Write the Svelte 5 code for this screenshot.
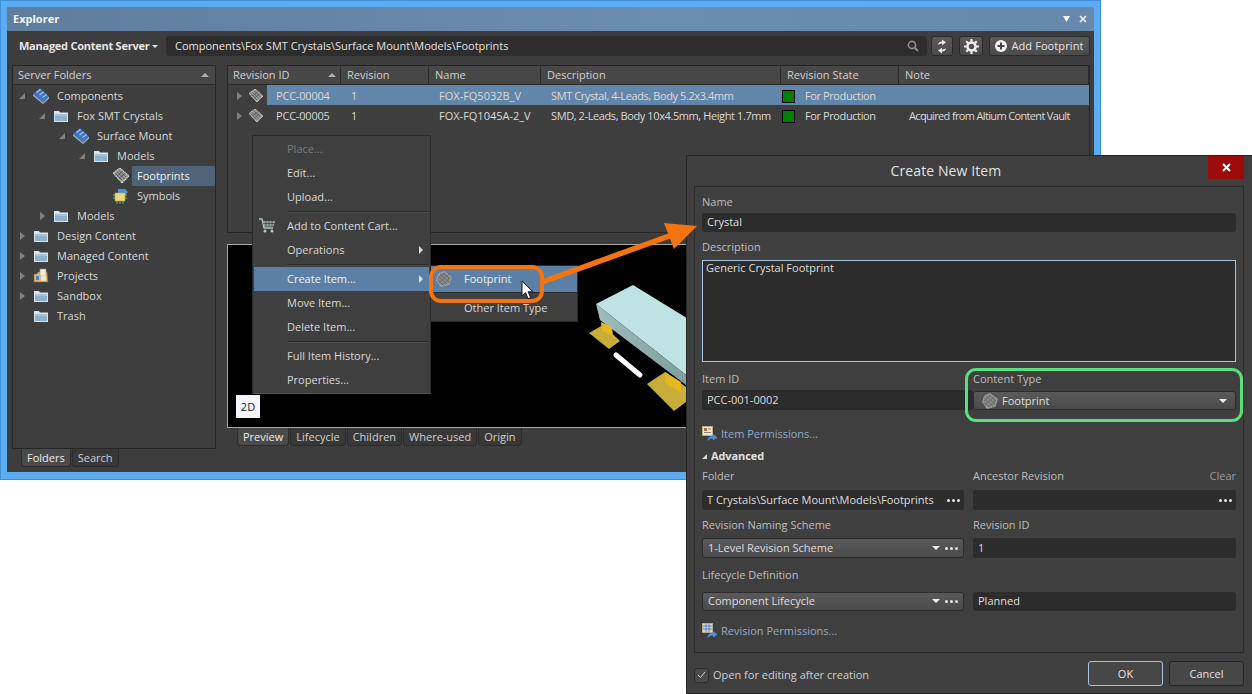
<script>
  const tree = [
    { label: "Components", level: 0, arrow: "open", icon: "comp" },
    { label: "Fox SMT Crystals", level: 1, arrow: "open", icon: "folder" },
    { label: "Surface Mount", level: 2, arrow: "open", icon: "comp" },
    { label: "Models", level: 3, arrow: "open", icon: "folder" },
    { label: "Footprints", level: 4, arrow: "", icon: "chip", selected: true },
    { label: "Symbols", level: 4, arrow: "", icon: "symbol" },
    { label: "Models", level: 1, arrow: "closed", icon: "folder" },
    { label: "Design Content", level: 0, arrow: "closed", icon: "folder" },
    { label: "Managed Content", level: 0, arrow: "closed", icon: "folder" },
    { label: "Projects", level: 0, arrow: "closed", icon: "project" },
    { label: "Sandbox", level: 0, arrow: "closed", icon: "folder" },
    { label: "Trash", level: 0, arrow: "", icon: "folder" }
  ];

  const columns = ["Revision ID", "Revision", "Name", "Description", "Revision State", "Note"];

  const revisions = [
    { id: "PCC-00004", rev: "1", name: "FOX-FQ5032B_V", desc: "SMT Crystal, 4-Leads, Body 5.2x3.4mm", note: "", selected: true },
    { id: "PCC-00005", rev: "1", name: "FOX-FQ1045A-2_V", desc: "SMD, 2-Leads, Body 10x4.5mm, Height 1.7mm", note: "Acquired from Altium Content Vault" }
  ];

  const menu = [
    { label: "Place...", disabled: true },
    { label: "Edit..." },
    { label: "Upload...", sep: true },
    { label: "Add to Content Cart...", cart: true },
    { label: "Operations", sub: true, sep: true },
    { label: "Create Item...", sub: true, active: true },
    { label: "Move Item..." },
    { label: "Delete Item...", sep: true },
    { label: "Full Item History..." },
    { label: "Properties..." }
  ];

  const previewTabs = ["Preview", "Lifecycle", "Children", "Where-used", "Origin"];
</script>

{#snippet icon(kind)}
  {#if kind === "folder"}
    <svg class="ico" viewBox="0 0 16 16">
      <path d="M1 3h5l1 1.500h8V14H1z" fill="#d6e6f1" />
      <path d="M2 6h12v7H2z" fill="#8eb0ca" />
      <path d="M2 6h12v2H2z" fill="#a4c3d9" />
    </svg>
  {:else if kind === "comp"}
    <svg class="ico" viewBox="0 0 16 16">
      <path d="M0 6 7 0l9 8.500-6 6z" fill="#3f74c8" />
      <path d="M0 6l10 8.500 6-6V10.500L10 16 0 7.800z" fill="#a3b4c4" />
      <path d="M3.500 4.500 7.500 1.500M6.500 7 10.500 4M9.500 9.500 13.500 6.500" stroke="#a8c8f0" stroke-width="1.100" />
    </svg>
  {:else if kind === "chip"}
    <svg class="ico" viewBox="0 0 16 16">
      <path d="M0 5 7 0l9 8-7 7z" fill="#979797" />
      <path d="M2 5.500 9 12M4 4l7 6.500M6 2.500l7 6.500M3.500 8.500l7-6M6 10.500l7-6" stroke="#575757" stroke-width=".9" />
      <path d="M0 5 9 15l7-7L7 0z" fill="none" stroke="#dedede" stroke-width="1.100" stroke-dasharray="1.300 .7" />
    </svg>
  {:else if kind === "symbol"}
    <svg class="ico" viewBox="0 0 16 16">
      <path d="M5 1h7l3 3-3 3H5z" fill="#4c8fe0" />
      <rect x="2" y="5" width="10" height="8" fill="#e8d77c" stroke="#b8a850" stroke-width=".6" />
      <path d="M0 7h2M0 10h2M12 7h2M12 10h2M4 13v3M7 13v3M10 13v3" stroke="#6cc04c" stroke-width="1" />
    </svg>
  {:else if kind === "project"}
    <svg class="ico" viewBox="0 0 16 16">
      <path d="M1 6h3l1-2h9l1 10H1z" fill="#dcb878" stroke="#8a6b35" stroke-width=".6" />
      <rect x="7" y="1" width="6" height="7" fill="#efefe0" stroke="#a09c80" stroke-width=".6" />
      <path d="M3 8h3v4H3z" fill="#4f86c0" />
      <rect x="8" y="8" width="5" height="5" fill="#f4e8b8" />
    </svg>
  {/if}
{/snippet}

{#snippet roundChip()}
  <svg class="round-chip" viewBox="0 0 16 16">
    <path d="M8 .500 15.500 6 13 13.500 5 15.500.500 9 2.500 3z" fill="#8b8b8b" />
    <path d="M2 5l10 9M4 3l10 9M7 2l7 6M1.500 9l7 6M3 12l10-9M1.500 8.500l7-6.500M6 14l8-7" stroke="#636363" stroke-width=".8" />
    <path d="M8 .500 15.500 6 13 13.500 5 15.500.500 9 2.500 3z" fill="none" stroke="#cdcdcd" stroke-width=".9" stroke-dasharray="1 1" />
  </svg>
{/snippet}

{#snippet perm(grid)}
  <svg class="perm" viewBox="0 0 16 16">
    <rect x="0.500" y="0.500" width="10" height="9" fill={grid ? "#cfdcec" : "#f3e6c4"} stroke="#c9b98a" stroke-width=".7" />
    {#if grid}
      <path d="M1 3h9M1 6h9M4 1v8M7 1v8" stroke="#5478a8" stroke-width=".9" />
    {:else}
      <rect x="2" y="2" width="3" height="3" fill="#b56a4a" />
      <path d="M6 3h3M2 6.500h7" stroke="#777" stroke-width=".9" />
    {/if}
    <path d="M5.500 15c0-3 2-5 5.500-5V8l4.500 3.500L11 14.500V12.500c-2 0-4 .8-5.500 2.500z" fill="#4d8fde" />
  </svg>
{/snippet}

{#snippet dots()}
  <span class="dots"><i></i><i></i><i></i></span>
{/snippet}

<div class="stage">
  <section class="explorer">
    <div class="inner">
      <header class="titlebar">
        <span class="title">Explorer</span>
        <span class="win-ctl">
          <svg width="7" height="6" viewBox="0 0 7 6"><path d="M0 0h7L3.500 6z" fill="#f0f0f0" /></svg>
          <svg width="8" height="8" viewBox="0 0 8 8"><path d="M1 1l6 6M7 1 1 7" stroke="#f0f0f0" stroke-width="1.700" /></svg>
        </span>
      </header>

      <div class="toolbar">
        <span class="server">Managed Content Server</span>
        <span class="server-caret"></span>
        <div class="path">
          <span>Components\Fox SMT Crystals\Surface Mount\Models\Footprints</span>
          <svg width="12" height="12" viewBox="0 0 12 12"><circle cx="5" cy="5" r="3.600" fill="none" stroke="#8e8e8e" stroke-width="1.600" /><path d="M7.800 7.800 11 11" stroke="#8e8e8e" stroke-width="2" /></svg>
        </div>
        <button class="tool sync" aria-label="Refresh">
          <svg width="12" height="15" viewBox="0 0 12 15"><path d="M2 6c0-2.500 2-3.500 4-3.500V.500L10 3.500 6 6.300V4.500C4.500 4.500 3.500 5 2 6z" fill="#e8e8e8" /><path d="M10 9c0 2.500-2 3.500-4 3.500v2L2 11.500 6 8.700v1.800c1.500 0 2.500-.5 4-1.500z" fill="#e8e8e8" /></svg>
        </button>
        <button class="tool gear" aria-label="Settings">
          <svg width="15" height="15" viewBox="0 0 15 15"><circle cx="7.500" cy="7.500" r="4" fill="none" stroke="#ececec" stroke-width="2.500" /><path d="M7.500 0v3M7.500 12v3M0 7.500h3M12 7.500h3M2.200 2.200l2 2M10.800 10.800l2 2M12.800 2.200l-2 2M4.200 10.800l-2 2" stroke="#ececec" stroke-width="2.200" /></svg>
        </button>
        <button class="tool add">
          <svg width="12" height="12" viewBox="0 0 12 12"><circle cx="6" cy="6" r="6" fill="#f2f2f2" /><path d="M6 2.500v7M2.500 6h7" stroke="#444" stroke-width="2" /></svg>
          Add Footprint
        </button>
      </div>

      <div class="body">
        <div class="left">
          <div class="panel folders">
            <div class="head head-left"><span>Server Folders</span><span class="sort"></span></div>
            <ul class="tree">
              {#each tree as node}
                <li class="node" style="padding-left: {4 + node.level * 20}px">
                  <span class="arrow {node.arrow}"></span>
                  {@render icon(node.icon)}
                  <span class="label" class:selected={node.selected}>{node.label}</span>
                </li>
              {/each}
            </ul>
          </div>
          <div class="tabs left-tabs">
            <span class="tab on">Folders</span>
            <span class="tab">Search</span>
          </div>
        </div>

        <div class="right">
          <div class="panel grid">
            <div class="row head">
              {#each columns as col, i}
                <span class="hcell">{col}{#if i === 0}<span class="sort"></span>{/if}</span>
              {/each}
            </div>
            {#each revisions as r}
              <div class="row rec" class:selected={r.selected}>
                <span class="cell first">
                  <span class="arrow closed"></span>
                  {@render icon("chip")}
                  <span class="rid">{r.id}</span>
                </span>
                <span class="cell">{r.rev}</span>
                <span class="cell">{r.name}</span>
                <span class="cell narrow">{r.desc}</span>
                <span class="cell state"><i class="swatch"></i><span class="narrow">For Production</span></span>
                <span class="cell narrower">{r.note}</span>
              </div>
            {/each}
          </div>

          <div class="preview">
            <svg class="model" width="460" height="182" viewBox="228 245 460 182">
              <defs>
                <linearGradient id="side" x1="0" y1="0" x2="1" y2="0">
                  <stop offset="0" stop-color="#9fbdbc" />
                  <stop offset="1" stop-color="#7f9c9a" />
                </linearGradient>
              </defs>
              <path d="M589 333 603 325 620 341 609 349z" fill="#c9ad3a" />
              <path d="M647 384 665 372 690 390V399L674 411z" fill="#c9ad3a" />
              <path d="M596 304 633 285 690 320V378z" fill="#bfe3e3" />
              <path d="M596 304 600 320 690 388V378z" fill="url(#side)" />
              <path d="M601 322 612 327 613 336 602 331z" fill="#e6b820" />
              <path d="M665 372 681 382 681 392 665 383z" fill="#e6b820" />
              <path d="M616 355 640 375" stroke="#fff" stroke-width="5" stroke-linecap="round" />
            </svg>
            <span class="two-d">2D</span>
          </div>

          <div class="tabs preview-tabs">
            {#each previewTabs as t, i}
              <span class="tab" class:on={i === 0}>{t}</span>
            {/each}
          </div>
        </div>
      </div>
    </div>
  </section>

  <nav class="menu">
    {#each menu as m}
      <div class="mi" class:disabled={m.disabled} class:active={m.active}>
        {#if m.cart}
          <svg class="cart" width="17" height="15" viewBox="0 0 17 15">
            <path d="M0 1h3l2 9h9" fill="none" stroke="#b9c4bd" stroke-width="1.300" />
            <path d="M4 3h12l-1.500 5.500H5z" fill="#9aa7a0" />
            <path d="M7 3v5.500M10 3v5.500M13 3v5.500M4.500 5.500h11" stroke="#444" stroke-width=".8" />
            <circle cx="6" cy="13" r="1.500" fill="#b9c4bd" /><circle cx="13" cy="13" r="1.500" fill="#b9c4bd" />
          </svg>
        {/if}
        <span>{m.label}</span>
        {#if m.sub}<i class="sub-arrow"></i>{/if}
      </div>
      {#if m.sep}<div class="msep"></div>{/if}
    {/each}
  </nav>

  <nav class="submenu">
    <div class="si active">{@render roundChip()}<span>Footprint</span></div>
    <div class="si other"><span>Other Item Type</span></div>
  </nav>

  <section class="dialog">
    <header class="dlg-title">
      <span>Create New Item</span>
      <button class="close" aria-label="Close">
        <svg width="9" height="9" viewBox="0 0 9 9"><path d="M1 1l7 7M8 1 1 8" stroke="#fff" stroke-width="2" /></svg>
      </button>
    </header>

    <div class="form">
      <label class="lbl">Name</label>
      <div class="input mt4 h19">Crystal</div>

      <label class="lbl mt8">Description</label>
      <div class="textarea">Generic Crystal Footprint</div>

      <div class="two mt10">
        <div>
          <label class="lbl">Item ID</label>
          <div class="input mt4 item-id">PCC-001-0002</div>
        </div>
        <div>
          <label class="lbl">Content Type</label>
          <div class="select mt5 h19 ctype">
            {@render roundChip()}
            <span>Footprint</span>
            <i class="caret"></i>
          </div>
        </div>
      </div>

      <div class="link mt17">{@render perm(false)}<span>Item Permissions...</span></div>

      <div class="adv mt8"><i class="adv-arrow"></i>Advanced</div>

      <div class="two mt6">
        <div>
          <label class="lbl">Folder</label>
          <div class="input mt7 split"><span>T Crystals\Surface Mount\Models\Footprints</span>{@render dots()}</div>
        </div>
        <div>
          <div class="lbl-row"><label class="lbl">Ancestor Revision</label><span class="clear">Clear</span></div>
          <div class="input mt7 split"><span></span>{@render dots()}</div>
        </div>
      </div>

      <div class="two mt8">
        <div>
          <label class="lbl">Revision Naming Scheme</label>
          <div class="select mt6"><span>1-Level Revision Scheme</span><i class="caret push"></i>{@render dots()}</div>
        </div>
        <div>
          <label class="lbl">Revision ID</label>
          <div class="input mt6">1</div>
        </div>
      </div>

      <div class="two mt10">
        <div>
          <label class="lbl">Lifecycle Definition</label>
          <div class="select mt10 h19"><span>Component Lifecycle</span><i class="caret push"></i>{@render dots()}</div>
        </div>
        <div class="end">
          <div class="input h19">Planned</div>
        </div>
      </div>

      <div class="link mt13">{@render perm(true)}<span>Revision Permissions...</span></div>
    </div>

    <footer class="dlg-foot">
      <span class="check">
        <svg width="9" height="8" viewBox="0 0 9 8"><path d="M1 4l2.500 2.500L8 1" fill="none" stroke="#cfcfcf" stroke-width="1" /></svg>
      </span>
      <span class="check-label">Open for editing after creation</span>
      <button class="btn ok">OK</button>
      <button class="btn">Cancel</button>
    </footer>
  </section>

  <div class="ring-green"></div>
  <div class="ring-orange"></div>

  <svg class="arrow-overlay" width="1252" height="694" viewBox="0 0 1252 694">
    <path d="M542 282 672 235" stroke="#f4740f" stroke-width="5.500" />
    <path d="M697 226 664 223 674 249z" fill="#f4740f" />
  </svg>

  <svg class="pointer" width="14" height="20" viewBox="0 0 14 20">
    <path d="M1 1v15l3.500-3.300 2.600 6 2.600-1.100-2.600-5.800H12z" fill="#fff" stroke="#111" stroke-width="1" />
  </svg>
</div>

<style>
  :global(body) {
    margin: 0;
    background: #fff;
  }

  .stage {
    position: relative;
    width: 1252px;
    height: 694px;
    overflow: hidden;
    font-family: "Open Sans", "Noto Sans", sans-serif;
    font-size: 11px;
    line-height: 14px;
    color: #d8d8d8;
  }

  button {
    font: inherit;
    color: inherit;
    padding: 0;
    cursor: default;
  }

  ul {
    list-style: none;
    margin: 0;
    padding: 0;
  }

  /* explorer window */
  .explorer {
    position: absolute;
    left: 0;
    top: 0;
    width: 1101px;
    height: 480px;
    box-sizing: border-box;
    border: 1px solid #3f8fd8;
    background: #5cacf2;
    padding: 6px 6px 7px 6px;
  }

  .inner {
    height: 100%;
    background: #3d3d3d;
    display: flex;
    flex-direction: column;
  }

  .titlebar {
    height: 24px;
    flex: none;
    display: flex;
    align-items: center;
    justify-content: space-between;
    padding: 0 6px;
    background: linear-gradient(90deg, #5f7e9e, #6b8db0 60%, #6688aa);
  }

  .title {
    font-weight: 700;
    color: #f4f4f4;
  }

  .win-ctl {
    display: flex;
    align-items: center;
    gap: 9px;
    padding-right: 1px;
  }

  .toolbar {
    height: 34px;
    flex: none;
    display: flex;
    align-items: center;
    padding: 0 3px 4px 12px;
    box-sizing: border-box;
  }

  .server {
    font-weight: 700;
    color: #e4e4e4;
    white-space: nowrap;
    width: 133px;
    letter-spacing: -0.25px;
    flex: none;
  }

  .server-caret {
    width: 0;
    height: 0;
    border: 3px solid transparent;
    border-top: 3px solid #e4e4e4;
    border-bottom: 0;
    margin-right: 8px;
  }

  .path {
    width: 761px;
    height: 20px;
    box-sizing: border-box;
    background: #2d2d2d;
    border-radius: 3px;
    display: flex;
    align-items: center;
    justify-content: space-between;
    padding: 0 8px 0 9px;
    color: #e2e2e2;
    flex: none;
  }

  .tool {
    height: 20px;
    box-sizing: border-box;
    background: linear-gradient(#5a5a5a, #4a4a4a);
    border: 1px solid #2a2a2a;
    border-radius: 3px;
    display: flex;
    align-items: center;
    justify-content: center;
    flex: none;
  }

  .sync {
    width: 22px;
    margin-left: 4px;
  }

  .gear {
    width: 24px;
    margin-left: 6px;
  }

  .add {
    width: 101px;
    margin-left: 6px;
    gap: 4px;
    color: #e4e4e4;
    letter-spacing: 0.1px;
  }

  .body {
    flex: 1;
    display: flex;
    padding: 0 4px 0 5px;
    min-height: 0;
  }

  .left {
    width: 204px;
    flex: none;
    display: flex;
    flex-direction: column;
  }

  .right {
    flex: 1;
    margin-left: 11px;
    display: flex;
    flex-direction: column;
    position: relative;
  }

  .panel {
    box-sizing: border-box;
    border: 1px solid #262626;
    background: #3e3e3e;
  }

  .folders {
    height: 384px;
  }

  .head {
    height: 19px;
    box-sizing: border-box;
    background: #474747;
    border-bottom: 1px solid #2b2b2b;
    color: #d0d0d0;
  }

  .head-left {
    display: flex;
    align-items: center;
    justify-content: space-between;
    padding: 0 5px 0 5px;
  }

  .sort {
    width: 0;
    height: 0;
    border: 4px solid transparent;
    border-bottom: 4px solid #b0b0b0;
    border-top: 0;
    margin-right: 1px;
  }

  .tree {
    padding-top: 1px;
  }

  .node {
    height: 20px;
    display: flex;
    align-items: center;
  }

  .arrow {
    width: 10px;
    height: 10px;
    flex: none;
    position: relative;
  }

  .arrow.open::before {
    content: "";
    position: absolute;
    left: 2px;
    top: 2px;
    border-style: solid;
    border-width: 0 0 6px 6px;
    border-color: transparent transparent #808080 transparent;
  }

  .arrow.closed::before {
    content: "";
    position: absolute;
    left: 3px;
    top: 1px;
    border-style: solid;
    border-width: 4px 0 4px 5px;
    border-color: transparent transparent transparent #808080;
  }

  .ico {
    width: 16px;
    height: 16px;
    margin-left: 6px;
    flex: none;
  }

  .label {
    margin-left: 3px;
    padding: 0 5px;
    height: 20px;
    line-height: 20px;
    flex: 1;
    white-space: nowrap;
  }

  .label.selected {
    background: #4f6478;
    color: #f0f0f0;
  }

  .tabs {
    display: flex;
    gap: 1px;
  }

  .tab {
    height: 18px;
    line-height: 17px;
    box-sizing: border-box;
    padding: 0 5px;
    background: #383838;
    border: 1px solid #2b2b2b;
    border-top: 0;
    border-radius: 0 0 4px 4px;
    color: #cfcfcf;
  }

  .tab.on {
    background: #4a4a4a;
    color: #ececec;
  }

  .left-tabs {
    padding-left: 9px;
  }

  .preview-tabs {
    padding-left: 10px;
  }

  .grid {
    height: 168px;
  }

  .row {
    display: grid;
    grid-template-columns: 113px 88px 112px 240px 118px 1fr;
    align-items: center;
  }

  .hcell {
    height: 18px;
    display: flex;
    align-items: center;
    justify-content: space-between;
    padding-left: 6px;
    border-right: 1px solid #2b2b2b;
    box-sizing: border-box;
    white-space: nowrap;
  }

  .hcell:first-child {
    padding-left: 5px;
  }

  .hcell .sort {
    margin-right: 4px;
  }

  .rec {
    height: 20px;
  }

  .rec.selected {
    background: linear-gradient(90deg, transparent 39px, #6286aa 39px);
  }

  .cell {
    padding-left: 10px;
    padding-top: 1px;
    white-space: nowrap;
    color: #dadada;
  }

  .narrow {
    letter-spacing: -0.4px;
  }

  .narrower {
    letter-spacing: -0.65px;
  }

  .first {
    display: flex;
    align-items: center;
    padding-left: 6px;
  }

  .first .ico {
    width: 14px;
    height: 14px;
    margin-left: 5px;
  }

  .rid {
    margin-left: 13px;
    letter-spacing: -0.2px;
  }

  .state {
    display: flex;
    align-items: center;
    padding-left: 1px;
    padding-top: 2px;
  }

  .swatch {
    width: 13px;
    height: 13px;
    box-sizing: border-box;
    background: #008000;
    border: 1px solid #000;
    margin-right: 10px;
  }

  .preview {
    position: relative;
    margin-top: 11px;
    height: 184px;
    box-sizing: border-box;
    background: #000;
    border: 1px solid #a8a8a8;
    border-right: 0;
  }

  .model {
    position: absolute;
    left: 0;
    top: 0;
  }

  .two-d {
    position: absolute;
    left: 8px;
    bottom: 9px;
    width: 24px;
    height: 23px;
    background: #f4f6fc;
    color: #222;
    text-align: center;
    line-height: 23px;
  }

  /* context menu */
  .menu {
    position: absolute;
    left: 252px;
    top: 135px;
    width: 179px;
    height: 259px;
    box-sizing: border-box;
    background: #3f3f3f;
    border: 1px solid #2a2a2a;
    border-bottom-color: #555;
    padding: 1px 1px 0;
  }

  .mi {
    height: 24px;
    display: flex;
    align-items: center;
    padding-left: 33px;
    position: relative;
  }

  .mi.disabled {
    color: #7c7c7c;
  }

  .mi.active {
    background: #5c80a5;
    color: #f0f0f0;
  }

  .cart {
    position: absolute;
    left: 5px;
    top: 4px;
  }

  .sub-arrow {
    position: absolute;
    right: 6px;
    top: 8px;
    border-style: solid;
    border-width: 4px 0 4px 4px;
    border-color: transparent transparent transparent #dcdcdc;
  }

  .msep {
    height: 1px;
    margin: 2px 0 2px 33px;
    background: #2c2c2c;
    box-shadow: 0 1px 0 #4c4c4c;
  }

  .submenu {
    position: absolute;
    left: 430px;
    top: 265px;
    width: 148px;
    height: 57px;
    box-sizing: border-box;
    background: #3f3f3f;
    border: 1px solid #2a2a2a;
  }

  .si {
    display: flex;
    align-items: center;
    padding-left: 5px;
  }

  .si.active {
    height: 26px;
    background: #5c80a5;
    color: #f0f0f0;
    border-bottom: 1px solid #2c2c2c;
    gap: 12px;
  }

  .si.other {
    height: 29px;
    padding-left: 33px;
  }

  .round-chip {
    width: 16px;
    height: 16px;
    flex: none;
  }

  /* dialog */
  .dialog {
    position: absolute;
    left: 686px;
    top: 155px;
    width: 566px;
    height: 539px;
    box-sizing: border-box;
    background: #3f3f3f;
    border: 1px solid #262626;
    border-right: 0;
    display: flex;
    flex-direction: column;
    padding: 0 8px 0 7px;
  }

  .dlg-title {
    height: 30px;
    flex: none;
    display: flex;
    align-items: center;
    justify-content: center;
    position: relative;
    font-size: 14px;
    color: #e2e2e2;
    padding-right: 46px;
    letter-spacing: 0.1px;
  }

  .close {
    position: absolute;
    right: 0;
    top: 0;
    width: 36px;
    height: 23px;
    border: 0;
    background: #9c0a0a;
    display: flex;
    align-items: center;
    justify-content: center;
  }

  .form {
    height: 467px;
    flex: none;
    box-sizing: border-box;
    border: 1px solid #2c2c2c;
    padding: 8px 7px 0;
    display: flex;
    flex-direction: column;
  }

  .lbl {
    display: block;
    height: 14px;
    color: #bdbdbd;
  }

  .lbl-row {
    display: flex;
    justify-content: space-between;
  }

  .clear {
    color: #9a9a9a;
  }

  .input,
  .select {
    height: 20px;
    box-sizing: border-box;
    border-radius: 3px;
    display: flex;
    align-items: center;
    padding: 0 5px;
    color: #dedede;
  }

  .input {
    background: #2c2c2c;
  }

  .select {
    background: linear-gradient(#5a5a5a, #4a4a4a);
    border: 1px solid #2a2a2a;
  }

  .h19 {
    height: 19px;
    padding-bottom: 1px;
  }

  .input.h19 {
    padding-bottom: 2px;
  }

  .item-id {
    margin-right: -9px;
  }

  .ctype {
    gap: 4px;
    padding-left: 8px;
    padding-bottom: 0;
    position: relative;
    z-index: 1;
  }

  .ctype .caret {
    margin-left: auto;
    margin-right: 3px;
  }

  .textarea {
    margin-top: 6px;
    height: 102px;
    box-sizing: border-box;
    background: #2c2c2c;
    border: 1px solid #a9c4dc;
    padding: 0 3px;
    color: #dedede;
  }

  .two {
    display: grid;
    grid-template-columns: 262px 263px;
    column-gap: 9px;
  }

  .end {
    display: flex;
    flex-direction: column;
    justify-content: flex-end;
  }

  .split {
    justify-content: space-between;
    padding-right: 4px;
  }

  .caret {
    width: 0;
    height: 0;
    border-style: solid;
    border-width: 4px 4px 0 4px;
    border-color: #eee transparent transparent transparent;
  }

  .push {
    margin-left: auto;
    margin-right: 5px;
  }

  .dots {
    display: inline-flex;
    gap: 2px;
    align-items: center;
  }

  .dots i {
    width: 3px;
    height: 3px;
    background: #e8e8e8;
    border-radius: 50%;
  }

  .link {
    display: flex;
    align-items: center;
    height: 14px;
    color: #8fabc8;
    gap: 3px;
  }

  .perm {
    width: 16px;
    height: 16px;
    flex: none;
  }

  .adv {
    height: 14px;
    display: flex;
    align-items: center;
    font-weight: 700;
    color: #e0e0e0;
    gap: 4px;
    letter-spacing: -0.1px;
  }

  .adv-arrow {
    border-style: solid;
    border-width: 0 0 5px 5px;
    border-color: transparent transparent #d8d8d8 transparent;
  }

  .mt4 { margin-top: 4px; }
  .mt5 { margin-top: 5px; }
  .mt6 { margin-top: 6px; }
  .mt7 { margin-top: 7px; }
  .mt8 { margin-top: 8px; }
  .mt10 { margin-top: 10px; }
  .mt13 { margin-top: 13px; }
  .mt17 { margin-top: 17px; }

  .dlg-foot {
    flex: 1;
    display: flex;
    align-items: center;
    padding-top: 1px;
  }

  .check {
    width: 15px;
    height: 15px;
    box-sizing: border-box;
    background: #4a4a4a;
    border: 1px solid #2a2a2a;
    border-radius: 3px;
    display: flex;
    align-items: center;
    justify-content: center;
    margin-top: 3px;
  }

  .check-label {
    margin-left: 4px;
    margin-top: 3px;
    color: #cfcfcf;
    flex: 1;
  }

  .btn {
    width: 75px;
    height: 25px;
    box-sizing: border-box;
    background: #474747;
    border: 1px solid #262626;
    border-radius: 3px;
    margin-left: 6px;
    color: #e2e2e2;
  }

  .btn.ok {
    border-color: #a9c4dc;
  }

  /* annotations */
  .ring-green {
    position: absolute;
    left: 965px;
    top: 368px;
    width: 278px;
    height: 54px;
    box-sizing: border-box;
    border: 3px solid #58e07e;
    border-radius: 11px;
  }

  .ring-orange {
    position: absolute;
    left: 429px;
    top: 265px;
    width: 115px;
    height: 38px;
    box-sizing: border-box;
    border: 4px solid #f4740f;
    border-radius: 12px;
  }

  .arrow-overlay {
    position: absolute;
    left: 0;
    top: 0;
    pointer-events: none;
  }

  .pointer {
    position: absolute;
    left: 521px;
    top: 280px;
  }
</style>
